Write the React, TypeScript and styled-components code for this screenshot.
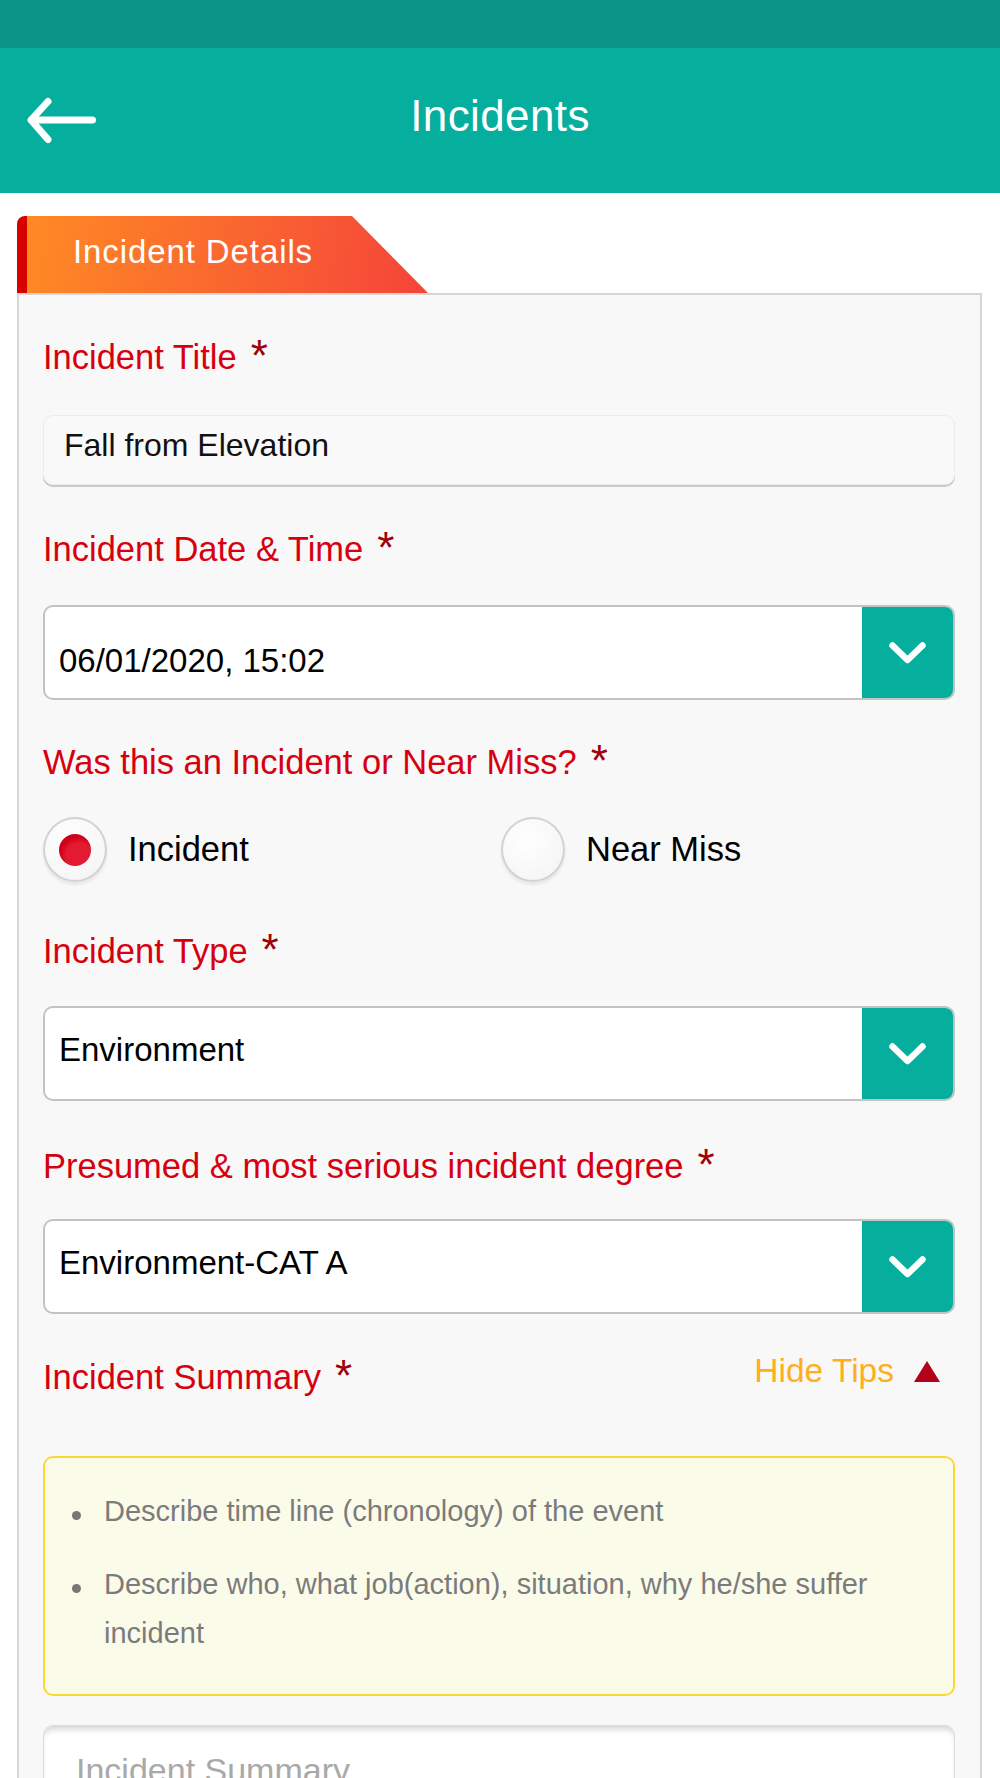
import React from "react";
import styled, { createGlobalStyle } from "styled-components";

const FONT = `"Liberation Sans", Arial, Helvetica, sans-serif`;

const GlobalStyle = createGlobalStyle`
  html, body { margin: 0; padding: 0; background: #fff; }
  body { font-family: ${FONT}; width: 1000px; height: 1778px; overflow: hidden; }
  * { box-sizing: border-box; }
`;

const Page = styled.div`
  width: 1000px;
  min-height: 1778px;
  background: #fff;
`;

const StatusBar = styled.div`
  height: 48px;
  background: #0a9587;
`;

const Header = styled.header`
  height: 145px;
  background: #06ae9e;
  display: grid;
  grid-template-columns: 1fr auto 1fr;
  align-items: center;
`;

const BackButton = styled.button`
  justify-self: start;
  margin: 0 0 0 26px;
  padding: 0;
  border: 0;
  background: none;
  width: 74px;
  height: 51px;
  display: flex;
`;

const Title = styled.h1`
  margin: 0;
  padding-bottom: 10px;
  color: #fff;
  font-weight: 400;
  font-size: 44px;
  letter-spacing: 0.4px;
`;

const Content = styled.main`
  padding: 23px 18px 0 17px;
`;

const Tab = styled.div`
  width: 411px;
  height: 77px;
  display: flex;
  align-items: center;
  padding: 0 0 5px 46px;
  border-left: 10px solid #d60000;
  border-top-left-radius: 8px;
  background: linear-gradient(100deg, #ff8a24 0%, #f5443a 100%);
  clip-path: polygon(0 0, 335px 0, 411px 100%, 0 100%);
  color: #fff;
  font-size: 33px;
  letter-spacing: 0.9px;
`;

const Panel = styled.section`
  border: 2px solid #d6d6d6;
  border-bottom: none;
  background: #f8f8f8;
  padding: 39px 25px 60px 24px;
  display: flex;
  flex-direction: column;
`;

const Field = styled.div<{ $top?: number }>`
  display: flex;
  flex-direction: column;
  margin-top: ${(p) => p.$top ?? 0}px;
`;

const Label = styled.div<{ $gap?: number }>`
  color: #d7000f;
  font-size: 34.5px;
  line-height: 46px;
  margin-bottom: ${(p) => p.$gap ?? 33}px;
`;

const Required = styled.span`
  color: #a0000a;
  font-size: 44px;
  line-height: 0;
  margin-left: 14px;
  vertical-align: -2px;
`;

const TextInput = styled.div`
  height: 70px;
  background: #f9f9f9;
  border: 1px solid #ececec;
  border-radius: 10px;
  box-shadow: 0 2px 0 #cacaca;
  display: flex;
  align-items: center;
  padding: 0 20px 10px;
  font-size: 32px;
  color: #111;
`;

const Select = styled.div`
  height: 95px;
  background: #fff;
  border: 2px solid #c3c3c3;
  border-radius: 10px;
  display: flex;
  overflow: hidden;
`;

const SelectValue = styled.div<{ $low?: boolean }>`
  flex: 1;
  display: flex;
  align-items: center;
  padding: ${(p) => (p.$low ? "17px 0 0 14px" : "0 0 7px 14px")};
  font-size: 33px;
  color: #000;
`;

const SelectButton = styled.div`
  width: 91px;
  background: #06ae9e;
  display: flex;
  align-items: center;
  justify-content: center;
`;

const RadioGroup = styled.div`
  display: grid;
  grid-template-columns: 1fr 1fr;
  column-gap: 4px;
`;

const RadioOption = styled.label`
  display: flex;
  align-items: center;
  gap: 21px;
  font-size: 34.5px;
  color: #000;
`;

const RadioCircle = styled.span<{ $checked?: boolean }>`
  flex: none;
  width: 64px;
  height: 65px;
  border-radius: 50%;
  border: 2px solid #d2d2d2;
  background: radial-gradient(circle at 40% 35%, #ffffff, #f3f3f3);
  box-shadow: 0 3px 3px rgba(0, 0, 0, 0.07);
  display: flex;
  align-items: center;
  justify-content: center;
  &::after {
    content: "";
    display: ${(p) => (p.$checked ? "block" : "none")};
    width: 32px;
    height: 32px;
    border-radius: 50%;
    background: radial-gradient(circle at 62% 68%, #e31b30 0 42%, #d1001a 64%);
  }
`;

const LabelRow = styled.div`
  display: flex;
  justify-content: space-between;
  align-items: flex-start;
`;

const HideTips = styled.button`
  display: flex;
  align-items: baseline;
  gap: 20px;
  margin: -6px 15px 0 0;
  padding: 0;
  border: 0;
  background: none;
  font-family: ${FONT};
  font-size: 33.5px;
  line-height: 46px;
  color: #fdb01a;
`;

const TipsBox = styled.ul`
  margin: 0;
  list-style: none;
  padding: 29px 50px 36px 27px;
  border: 2px solid #fdd835;
  border-radius: 10px;
  background: #fbfbea;
  color: #7b7b7b;
  font-size: 29px;
  line-height: 49px;
  display: flex;
  flex-direction: column;
  gap: 24px;
`;

const Tip = styled.li`
  position: relative;
  padding-left: 32px;
  &::before {
    content: "";
    position: absolute;
    left: 0;
    top: 24px;
    width: 9px;
    height: 9px;
    border-radius: 50%;
    background: #777;
  }
`;

const TextArea = styled.div`
  margin-top: 29px;
  height: 220px;
  background: #fff;
  border: 1px solid #dcdcdc;
  border-radius: 10px;
  box-shadow: inset 0 6px 6px -3px rgba(0, 0, 0, 0.18);
  padding: 25px 32px;
  color: #a9a9a9;
  font-size: 34px;
`;

const BackArrow = () => (
  <svg width="74" height="51" viewBox="0 0 74 51" fill="none">
    <path
      d="M66.5 25 H6 M22 6.5 L5 25 L22 44.5"
      stroke="#fff"
      strokeWidth="7"
      strokeLinecap="round"
      strokeLinejoin="round"
    />
  </svg>
);

const Chevron = () => (
  <svg width="41" height="26" viewBox="0 0 41 26" fill="none">
    <path
      d="M5.5 5.5 L20.5 20 L35.5 5.5"
      stroke="#fff"
      strokeWidth="6.5"
      strokeLinecap="round"
      strokeLinejoin="round"
    />
  </svg>
);

const UpTriangle = () => (
  <svg width="26" height="21" viewBox="0 0 26 21">
    <polygon points="13,0 26,21 0,21" fill="#b3001b" />
  </svg>
);

const SelectBox = ({ value, low }: { value: string; low?: boolean }) => (
  <Select>
    <SelectValue $low={low}>{value}</SelectValue>
    <SelectButton>
      <Chevron />
    </SelectButton>
  </Select>
);

export default function App() {
  return (
    <Page>
      <GlobalStyle />
      <StatusBar />
      <Header>
        <BackButton aria-label="Back">
          <BackArrow />
        </BackButton>
        <Title>Incidents</Title>
        <span />
      </Header>
      <Content>
        <Tab>Incident Details</Tab>
        <Panel>
          <Field>
            <Label $gap={35}>
              Incident Title<Required>*</Required>
            </Label>
            <TextInput>Fall from Elevation</TextInput>
          </Field>
          <Field $top={41}>
            <Label>
              Incident Date &amp; Time<Required>*</Required>
            </Label>
            <SelectBox value="06/01/2020, 15:02" low />
          </Field>
          <Field $top={39}>
            <Label $gap={32}>
              Was this an Incident or Near Miss?<Required>*</Required>
            </Label>
            <RadioGroup>
              <RadioOption>
                <RadioCircle $checked />
                Incident
              </RadioOption>
              <RadioOption>
                <RadioCircle />
                Near Miss
              </RadioOption>
            </RadioGroup>
          </Field>
          <Field $top={46}>
            <Label $gap={32}>
              Incident Type<Required>*</Required>
            </Label>
            <SelectBox value="Environment" />
          </Field>
          <Field $top={42}>
            <Label $gap={30}>
              Presumed &amp; most serious incident degree<Required>*</Required>
            </Label>
            <SelectBox value="Environment-CAT A" />
          </Field>
          <Field $top={40}>
            <LabelRow>
              <Label $gap={56}>
                Incident Summary<Required>*</Required>
              </Label>
              <HideTips>
                Hide Tips
                <UpTriangle />
              </HideTips>
            </LabelRow>
            <TipsBox>
              <Tip>Describe time line (chronology) of the event</Tip>
              <Tip>Describe who, what job(action), situation, why he/she suffer incident</Tip>
            </TipsBox>
            <TextArea>Incident Summary</TextArea>
          </Field>
        </Panel>
      </Content>
    </Page>
  );
}
